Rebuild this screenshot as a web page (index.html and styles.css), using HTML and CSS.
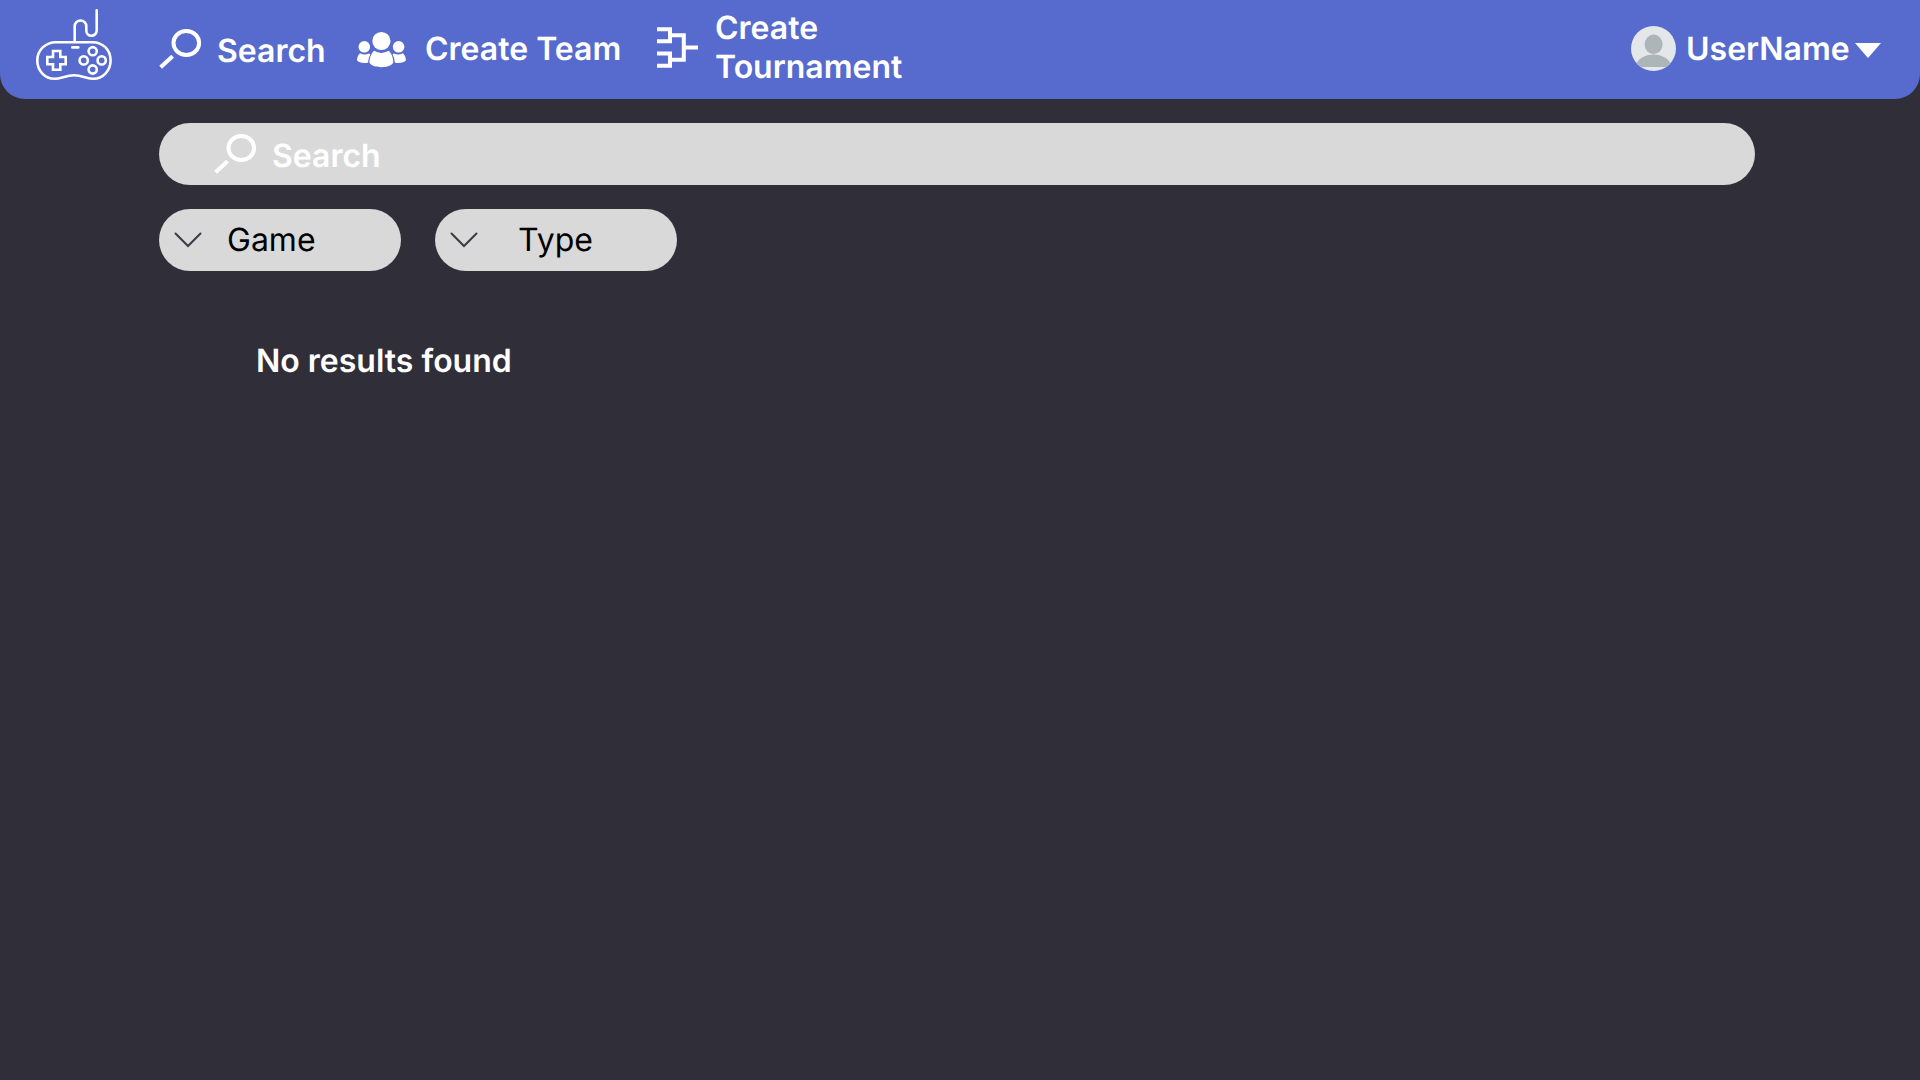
FILE: index.html
```html
<!DOCTYPE html>
<html lang="en">
<head>
<meta charset="utf-8">
<title>Search</title>
<link rel="stylesheet" href="styles.css">
</head>
<body>
<header class="topbar">
  <a class="logo">
    <svg width="78" height="74" viewBox="0 0 78 74" fill="none" stroke="#fff" stroke-width="2.6" stroke-linecap="round">
      <path d="M21 34.2H57.5C68 34.2 75.6 42 75.6 52.5S67.5 70.7 58.5 70.7C52 70.7 47 67.3 39 67.3S26 70.7 19.5 70.7C10 70.7 2.3 63 2.3 52.5S10.5 34.2 21 34.2Z"/>
      <path d="M39.7 34V18.3a5.8 5.8 0 0 1 11.6 0V22.6a5.2 5.2 0 0 0 10.4 0V2.2"/>
      <path d="M37.3 39.4H43.3"/>
      <path stroke-linecap="butt" d="M18 43H25.3V49H30.7V56.3H25.3V61.7H18V56.3H12.3V49H18Z"/>
      <circle cx="57.7" cy="43.2" r="4.1"/>
      <circle cx="48.7" cy="52.4" r="4.1"/>
      <circle cx="66.7" cy="52.4" r="4.1"/>
      <circle cx="57.7" cy="61.5" r="4.1"/>
    </svg>
  </a>
  <nav class="nav">
    <a class="nav-item nav-search">
      <svg width="43" height="42" viewBox="0 0 43 42" fill="none" stroke="#fff" stroke-width="4">
        <ellipse cx="27.3" cy="15" rx="12.8" ry="12"/>
        <path d="M1.6 39.2L13.6 28.2"/>
      </svg>
      <span>Search</span>
    </a>
    <a class="nav-item nav-team">
      <svg width="50" height="37" viewBox="0 0 50 37" fill="#fff">
        <circle cx="24.4" cy="10" r="9.1"/>
        <circle cx="7.3" cy="15.8" r="5.8"/>
        <circle cx="41.6" cy="15.8" r="5.8"/>
        <path d="M17 19.8Q24.4 24 31.8 19.8C35 23 36.3 27.5 36.3 31.5C35 34.5 30 36.2 24.4 36.2S13.6 34.5 12.4 31.5C12.4 27.5 13.8 23 17 19.8Z"/>
        <path d="M3 22.2Q7.3 24.8 12 22.4L13.4 23.4C11.9 26 11.2 28.8 11.2 31.6C7 32.8 1.5 31.8 0 29.3C0 26.5 1 24 3 22.2Z"/>
        <path d="M45.9 22.2Q41.6 24.8 36.9 22.4L35.5 23.4C37 26 37.7 28.8 37.7 31.6C41.9 32.8 47.4 31.8 48.9 29.3C48.9 26.5 47.9 24 45.9 22.2Z"/>
      </svg>
      <span>Create Team</span>
    </a>
    <a class="nav-item nav-tournament">
      <svg width="41" height="41" viewBox="0 0 41 41" fill="none" stroke="#fff" stroke-width="4">
        <path d="M0 2.2H13V14.3H0M0 26.5H13V38.8H0M13 8.2H26.8V32.7H13M26.8 20.4H41"/>
      </svg>
      <span>Create<br>Tournament</span>
    </a>
  </nav>
  <a class="user">
    <svg width="45" height="45" viewBox="0 0 45 45">
      <circle cx="22.5" cy="22.5" r="22.5" fill="#e4e7e9"/>
      <ellipse cx="22.6" cy="18.4" rx="9" ry="9.8" fill="#aeb5b9"/>
      <path d="M5.6 37C9 31.5 15.5 28.6 22.5 28.6S36 31.5 39.4 37Q37.5 39.5 35 41H10Q7.5 39.5 5.6 37Z" fill="#aeb5b9"/>
    </svg>
    <span>UserName</span>
    <svg class="caret" width="26" height="15" viewBox="0 0 26 15"><path d="M0 0H26L13 15Z" fill="#fff"/></svg>
  </a>
</header>
<main class="content">
  <div class="searchbar">
    <svg width="43" height="42" viewBox="0 0 43 42" fill="none" stroke="#fff" stroke-width="4">
      <ellipse cx="27.3" cy="15" rx="12.8" ry="12"/>
      <path d="M1.6 39.2L13.6 28.2"/>
    </svg>
    <span>Search</span>
  </div>
  <div class="filters">
    <div class="filter filter-game">
      <svg width="28" height="16" viewBox="0 0 28 16" fill="none" stroke="#3b3a48" stroke-width="2" stroke-linecap="round"><path d="M1.5 1.5L14 14L26.5 1.5"/></svg>
      <span>Game</span>
    </div>
    <div class="filter filter-type">
      <svg width="28" height="16" viewBox="0 0 28 16" fill="none" stroke="#3b3a48" stroke-width="2" stroke-linecap="round"><path d="M1.5 1.5L14 14L26.5 1.5"/></svg>
      <span>Type</span>
    </div>
  </div>
  <p class="empty">No results found</p>
</main>
</body>
</html>
```
FILE: styles.css
```css
* { box-sizing: border-box; }
body {
  margin: 0;
  min-height: 100vh;
  background: #302e38;
  color: #fff;
  font: 600 32px/39px Inter, sans-serif;
  text-rendering: geometricPrecision;
}
svg { display: block; flex: none; }
.topbar {
  display: flex;
  align-items: flex-start;
  height: 99px;
  padding: 0 39px 0 35px;
  background: #566bcd;
  border-radius: 0 0 25px 25px;
}
.logo { padding-top: 8px; }
.nav {
  display: flex;
  align-items: flex-start;
  flex: 1;
  padding-left: 46px;
}
.nav-item { display: flex; align-items: flex-start; white-space: nowrap; }
.nav-search { width: 198px; padding-top: 28px; gap: 15px; }
.nav-search span { padding-top: 3px; }
.nav-team { width: 300px; padding-top: 29px; gap: 18px; }
.nav-team svg { margin-top: 2px; }
.nav-tournament { padding-top: 8px; gap: 17px; }
.nav-tournament svg { margin-top: 19px; }
.user { display: flex; align-items: center; padding-top: 26px; }
.user span { width: 169px; margin: 0 0 0 10px; }
.user .caret { margin-top: 4px; }
.content { padding: 24px 165px 0 159px; }
.searchbar {
  display: flex;
  height: 62px;
  padding: 10px 55px;
  gap: 15px;
  border-radius: 31px;
  background: #d9d9d9;
}
.searchbar span { padding-top: 3px; }
.filters { display: flex; gap: 34px; margin-top: 24px; }
.filter {
  display: flex;
  width: 242px;
  height: 62px;
  padding: 11px 15px;
  border-radius: 31px;
  background: #d9d9d9;
  color: #000;
  font-weight: 400;
}
.filter svg { margin-top: 12px; }
.filter-game span { margin-left: 25px; }
.filter-type span { margin-left: 40px; }
.empty { margin: 70px 0 0 97px; }
```
